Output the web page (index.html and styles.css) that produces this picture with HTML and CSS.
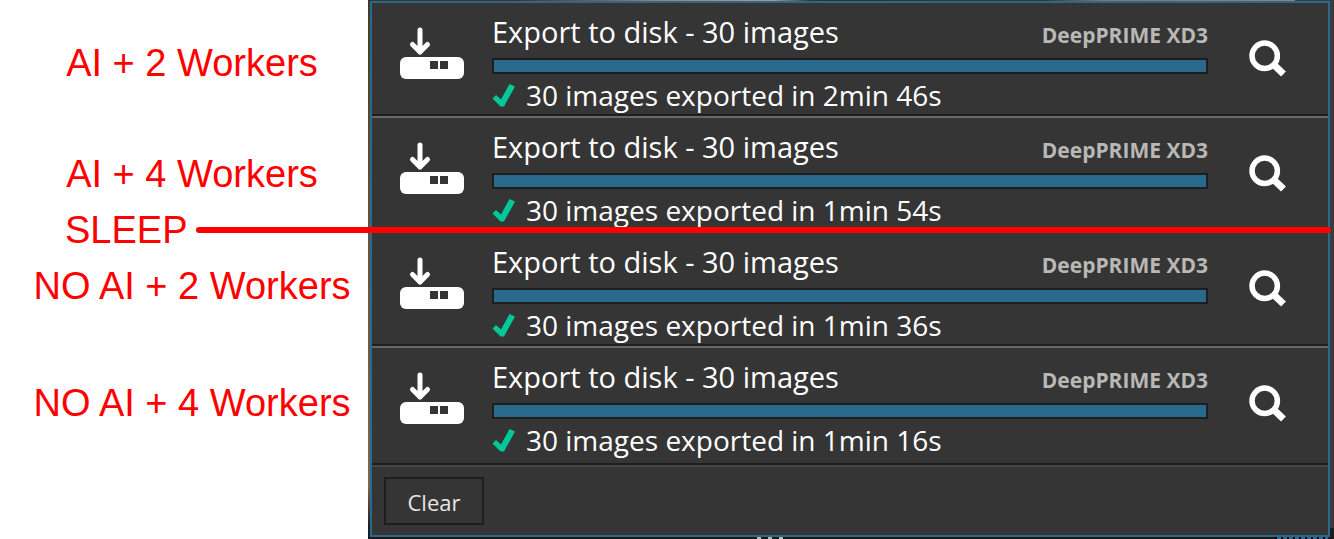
FILE: index.html
```html
<!DOCTYPE html>
<html lang="en">
<head>
    <meta charset="UTF-8">
    <meta name="viewport" content="width=device-width, initial-scale=1.0">
    <title>Export times</title>
    <link rel="stylesheet" href="styles.css">
</head>
<body>
    <!-- Shared icons -->
    <svg class="sprite" xmlns="http://www.w3.org/2000/svg">
        <symbol id="icon-disk" viewBox="0 0 64 54">
            <rect x="0" y="31" width="64" height="22" rx="6" fill="#fff"/>
            <path d="M30 35h8v8h-8zM40 35h8v8h-8z" fill="#353535"/>
            <path d="M20 4v22M12.500 18.500l7.500 7.500 7.500-7.500" fill="none" stroke="#fff" stroke-width="5" stroke-linecap="round" stroke-linejoin="round"/>
        </symbol>
        <symbol id="icon-check" viewBox="0 0 24 24">
            <path d="M0.500 15.500L4 12l5 4.500L17.500 1l5.500 2.500L12 23.500H8.500z" fill="#00c999"/>
        </symbol>
        <symbol id="icon-search" viewBox="0 0 40 40">
            <circle cx="16.700" cy="16.800" r="12.700" fill="none" stroke="#fff" stroke-width="5.500"/>
            <path d="M25.500 25.500L35.500 35" fill="none" stroke="#fff" stroke-width="7"/>
        </symbol>
    </svg>

    <div class="page">
        <div class="notes">
            <p class="note">AI + 2 Workers</p>
            <p class="note">AI + 4 Workers</p>
            <p class="note note-sleep">SLEEP</p>
            <p class="note">NO AI + 2 Workers</p>
            <p class="note note-last">NO AI + 4 Workers</p>
        </div>

        <div class="backdrop">
            <div class="photo"></div>
            <div class="panel">
                <div class="job">
                    <svg class="disk"><use href="#icon-disk"/></svg>
                    <div class="job-body">
                        <div class="job-head">
                            <label class="job-title" for="job1">Export to disk - 30 images</label>
                            <span class="job-mode">DeepPRIME XD3</span>
                        </div>
                        <progress id="job1" class="bar" value="30" max="30"></progress>
                        <div class="job-status"><svg class="check"><use href="#icon-check"/></svg>30 images exported in 2min 46s</div>
                    </div>
                    <button class="show" aria-label="Show images"><svg class="search"><use href="#icon-search"/></svg></button>
                </div>
                <div class="job">
                    <svg class="disk"><use href="#icon-disk"/></svg>
                    <div class="job-body">
                        <div class="job-head">
                            <label class="job-title" for="job2">Export to disk - 30 images</label>
                            <span class="job-mode">DeepPRIME XD3</span>
                        </div>
                        <progress id="job2" class="bar" value="30" max="30"></progress>
                        <div class="job-status"><svg class="check"><use href="#icon-check"/></svg>30 images exported in 1min 54s</div>
                    </div>
                    <button class="show" aria-label="Show images"><svg class="search"><use href="#icon-search"/></svg></button>
                </div>
                <div class="job">
                    <svg class="disk"><use href="#icon-disk"/></svg>
                    <div class="job-body">
                        <div class="job-head">
                            <label class="job-title" for="job3">Export to disk - 30 images</label>
                            <span class="job-mode">DeepPRIME XD3</span>
                        </div>
                        <progress id="job3" class="bar" value="30" max="30"></progress>
                        <div class="job-status"><svg class="check"><use href="#icon-check"/></svg>30 images exported in 1min 36s</div>
                    </div>
                    <button class="show" aria-label="Show images"><svg class="search"><use href="#icon-search"/></svg></button>
                </div>
                <div class="job job-last">
                    <svg class="disk"><use href="#icon-disk"/></svg>
                    <div class="job-body">
                        <div class="job-head">
                            <label class="job-title" for="job4">Export to disk - 30 images</label>
                            <span class="job-mode">DeepPRIME XD3</span>
                        </div>
                        <progress id="job4" class="bar" value="30" max="30"></progress>
                        <div class="job-status"><svg class="check"><use href="#icon-check"/></svg>30 images exported in 1min 16s</div>
                    </div>
                    <button class="show" aria-label="Show images"><svg class="search"><use href="#icon-search"/></svg></button>
                </div>
                <div class="panel-footer">
                    <button class="clear">Clear</button>
                </div>
            </div>
            <div class="strip">
                <span class="dots"></span>
                <span class="ticks"></span>
            </div>
        </div>

        <div class="sleep-line"></div>
    </div>
</body>
</html>
```

FILE: styles.css
```css
body {
    margin: 0;
    background: #fff;
    font-family: "Open Sans", "Noto Sans", sans-serif;
}

.sprite {
    display: none;
}

.page {
    position: relative;
    display: grid;
    grid-template-columns: 368px 1fr;
}

/* Red notes on the left */
.notes {
    display: flex;
    flex-direction: column;
    padding-top: 35px;
}

.note {
    margin: 0 0 55px;
    padding-left: 16px;
    font-family: "Liberation Sans", Arial, sans-serif;
    font-size: 38px;
    line-height: 56px;
    color: #f00;
    text-align: center;
    white-space: nowrap;
}

.note:nth-child(2),
.note-sleep {
    margin-bottom: 0;
}

.note-sleep {
    padding-left: 65px;
    text-align: left;
}

.note:nth-child(4) {
    margin-bottom: 61px;
}

.note-last {
    margin-bottom: 0;
}

/* Line drawn across the jobs */
.sleep-line {
    position: absolute;
    left: 196px;
    right: 3px;
    top: 227px;
    height: 6px;
    border-radius: 3px;
    background: #f00;
}

/* Edges of the window behind the panel */
.backdrop {
    background:
        linear-gradient(#3e3b2c, #65503c 40%, #80664d 90%, #1b1b22 98%) left / 2px 100% no-repeat,
        linear-gradient(#3b3b3d 98%, #1c1c20 98%);
}

.photo {
    height: 1px;
    background: linear-gradient(90deg, #3c3428, #4a3020 15%, #9c8468 30%, #b09a80 42%, #35302c 46%, #3b3632 70%, #8c7462 76%, #9a8270 96%, #3b3b3d 96%);
}

.panel {
    margin: 0 4px 0 2px;
    border: 2px solid #29698c;
    background: #353535;
}

.job {
    display: flex;
    align-items: flex-start;
    padding: 10px 0 2px 28px;
    border-bottom: 2px solid #686868;
    box-shadow: inset 0 -2px #1e1e1e;
}

.job-last {
    padding-bottom: 6px;
    border-bottom-color: #464646;
}

.disk {
    flex: none;
    width: 64px;
    height: 54px;
    margin: 13px 28px 0 0;
}

.job-body {
    flex: 1;
    min-width: 0;
}

.job-head {
    display: flex;
    justify-content: space-between;
    align-items: baseline;
    height: 38px;
    line-height: 38px;
    margin-bottom: 7px;
}

.job-title {
    font-size: 29px;
    color: #fff;
    white-space: nowrap;
}

.job-mode {
    font-size: 21px;
    font-weight: 700;
    color: #b9b8b6;
    white-space: nowrap;
}

.bar {
    display: block;
    box-sizing: border-box;
    width: 100%;
    height: 16px;
    border: 2px solid #1e1e1e;
    background: #1e1e1e;
    appearance: none;
}

.bar::-webkit-progress-bar {
    background: #1e1e1e;
}

.bar::-webkit-progress-value {
    background: #29698c;
}

.job-status {
    display: flex;
    align-items: center;
    gap: 10px;
    margin-top: 2px;
    font-size: 28px;
    line-height: 38px;
    color: #fff;
    white-space: nowrap;
}

.check {
    width: 24px;
    height: 24px;
}

.show {
    flex: none;
    width: 120px;
    padding: 26px 0 0;
    border: 0;
    background: none;
}

.search {
    display: block;
    width: 40px;
    height: 40px;
    margin: 0 auto;
}

.panel-footer {
    padding: 10px 12px;
}

.clear {
    display: block;
    width: 100px;
    height: 48px;
    padding: 2px 0 0;
    border: 2px solid #1e1e1e;
    background: #353535;
    color: #e6e6e6;
    font-family: inherit;
    font-size: 22px;
}

/* Tops of the controls below the panel */
.strip {
    display: flex;
    justify-content: flex-end;
    height: 2px;
    padding-right: 6px;
    background: #1b171d;
}

.dots {
    width: 26px;
    margin-right: auto;
    margin-left: 389px;
    background: repeating-linear-gradient(90deg, #b8b8b8 0 4px, #1b171d 4px 11px);
}

.ticks {
    width: 53px;
    background: repeating-linear-gradient(90deg, #000 0 2px, #29698c 2px 6px);
}
```
